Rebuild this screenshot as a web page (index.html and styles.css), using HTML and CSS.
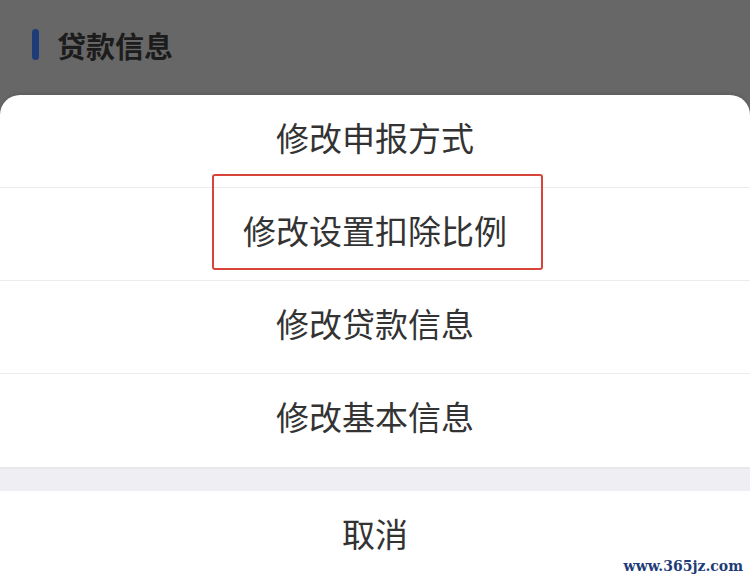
FILE: index.html
```html
<!DOCTYPE html>
<html lang="zh-CN">
<head>
  <meta charset="UTF-8">
  <meta name="viewport" content="width=device-width, initial-scale=1.0">
  <title>修改选项</title>
  <link rel="stylesheet" href="styles.css">
</head>
<body>
  <div class="page">
    <div class="header">
      <span class="header-bar"></span>
      <h2 class="header-title">贷款信息</h2>
    </div>

    <div class="sheet">
      <ul class="sheet-list">
        <li class="sheet-item">修改申报方式</li>
        <li class="sheet-item">修改设置扣除比例</li>
        <li class="sheet-item">修改贷款信息</li>
        <li class="sheet-item">修改基本信息</li>
      </ul>
      <div class="sheet-gap"></div>
      <div class="sheet-cancel">取消</div>
    </div>

    <div class="highlight"></div>
    <div class="watermark">www.365jz.com</div>
  </div>
</body>
</html>
```

FILE: styles.css
```css
* {
  box-sizing: border-box;
}

body {
  margin: 0;
  font-family: "Noto Sans CJK SC", "Noto Sans", sans-serif;
  background-color: #676767;
}

.page {
  position: relative;
  width: 750px;
  height: 580px;
  overflow: hidden;
}

.header {
  display: flex;
  align-items: center;
  height: 95px;
  padding: 0 0 6px 32px;
  background-color: #676767;
}

.header-bar {
  width: 7px;
  height: 31px;
  border-radius: 4px;
  background-color: #1d3d78;
  margin-right: 18px;
}

.header-title {
  margin: 0;
  font-size: 29px;
  font-weight: bold;
  color: #1c1c1c;
}

.sheet {
  background-color: #fff;
  border-radius: 20px 20px 0 0;
  box-shadow: 0 -2px 3px rgba(0, 0, 0, 0.08);
}

.sheet-list {
  list-style: none;
  margin: 0;
  padding: 0;
}

.sheet-item,
.sheet-cancel {
  display: flex;
  align-items: center;
  justify-content: center;
  height: 93px;
  padding-bottom: 9px;
  font-size: 33px;
  color: #333;
}

.sheet-item {
  border-bottom: 1px solid #ececec;
}

.sheet-item:last-child {
  border-bottom: none;
}

.sheet-gap {
  height: 24px;
  background-color: #efeff3;
  border-top: 2px solid #e8e8ea;
}

.sheet-cancel {
  height: 90px;
  padding-bottom: 7px;
}

.highlight {
  position: absolute;
  left: 212px;
  top: 174px;
  width: 331px;
  height: 96px;
  border: 2px solid #d9443a;
  border-radius: 3px;
}

.watermark {
  position: absolute;
  right: 7px;
  bottom: 6px;
  font-family: "DejaVu Serif", serif;
  font-size: 14px;
  font-weight: bold;
  color: #1d3c78;
}
```
